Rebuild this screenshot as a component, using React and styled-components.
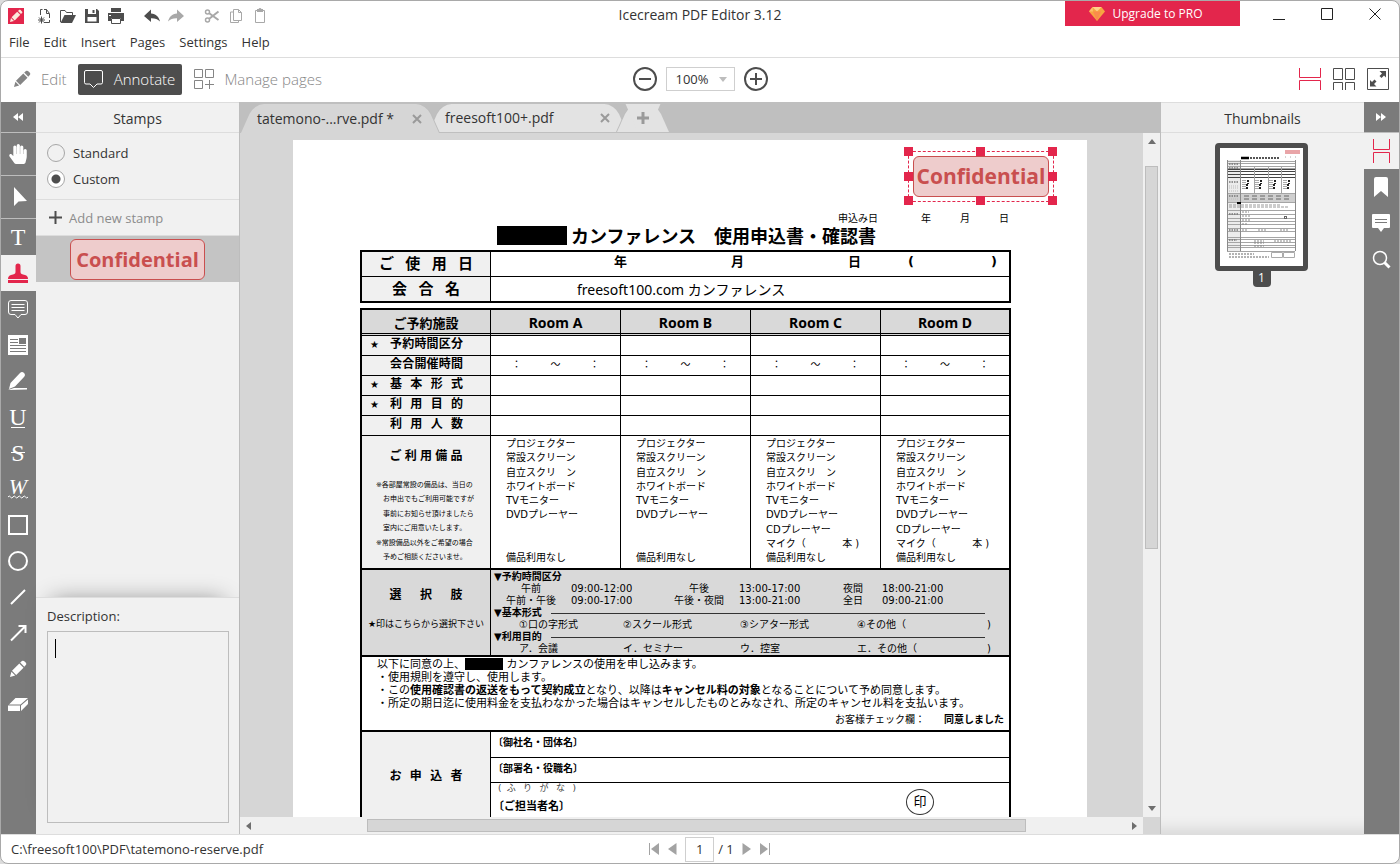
import React from "react";
import styled, { createGlobalStyle, css } from "styled-components";
import { FaHandPaper } from "react-icons/fa";

const c = {
  red: "#e3264c",
  rail: "#7b7b7b",
  panel: "#f1f1f1",
  line: "#dddddd",
  edge: "#bdbdbd",
  canvas: "#d6d6d6",
  dark: "#4d4d4d",
  text: "#333333",
  mute: "#8c8c8c",
};

const GlobalStyle = createGlobalStyle`
  *, *::before, *::after { box-sizing: border-box; }
  body { margin: 0; background: #dcdcdc; font-family: "Open Sans", "Noto Sans", sans-serif; font-size: 13px; color: ${c.text}; }
  button, input, select, textarea { font: inherit; color: inherit; margin: 0; padding: 0; border: 0; background: none; }
  svg { display: block; flex: none; }
`;

const Window = styled.div`
  height: 100vh;
  display: flex;
  flex-direction: column;
  overflow: hidden;
  background: #fff;
  border: 1px solid #a9a9a9;
  border-radius: 8px;
`;

/* ---------- title, menu and mode bars ---------- */

const TitleBar = styled.header`
  display: grid;
  grid-template-columns: 1fr auto 1fr;
  align-items: start;
  height: 29px;
`;
const QuickBar = styled.div`
  display: flex;
  padding: 3px 0 0 3px;
`;
const QuickButton = styled.button`
  width: 24px;
  height: 24px;
  color: ${(p) => (p.$muted ? "#a8a8a8" : c.dark)};
  margin-right: ${(p) => p.$gap || 0}px;
`;
const Title = styled.h1`
  margin: 0;
  font-size: 14px;
  line-height: 28px;
  font-weight: 400;
`;
const WindowButtons = styled.div`
  display: flex;
  justify-content: flex-end;
`;
const Upgrade = styled.button`
  width: 175px;
  height: 25px;
  margin-right: 15px;
  padding-right: 14px;
  display: flex;
  align-items: center;
  justify-content: center;
  gap: 8px;
  background: ${c.red};
  color: #fff;
  font-size: 12px;
`;
const WindowButton = styled.button`
  width: 48px;
  height: 26px;
  display: grid;
  place-items: center;
  color: #222;
`;
const MenuBar = styled.nav`
  display: flex;
  gap: 14px;
  height: 28px;
  padding-left: 8px;
  border-bottom: 1px solid ${c.line};
`;
const MenuButton = styled.button`
  line-height: 24px;
  height: 24px;
`;
const ModeBar = styled.div`
  display: grid;
  grid-template-columns: 1fr auto 1fr;
  align-items: center;
  height: 44px;
  padding-bottom: 2px;
`;
const Modes = styled.div`
  display: flex;
  align-items: center;
`;
const ModeButton = styled.button`
  display: flex;
  align-items: center;
  gap: 10px;
  height: 31px;
  padding: 0 7px 0 6px;
  border-radius: 2px;
  font-size: 15px;
  font-weight: 300;
  color: ${(p) => (p.$active ? "#fff" : "#858585")};
  background: ${(p) => (p.$active ? c.dark : "transparent")};
  & + & { margin-left: 6px; }
  &:first-child { padding: 0 5px 0 12px; }
`;
const ZoomGroup = styled.div`
  display: flex;
  align-items: center;
  gap: 9px;
`;
const IconButton = styled.button`
  display: grid;
  place-items: center;
  color: ${(p) => p.$color || c.dark};
`;
const SelectWrap = styled.label`
  position: relative;
  svg { position: absolute; right: 8px; top: 10px; pointer-events: none; }
`;
const ZoomSelect = styled.select`
  appearance: none;
  width: 69px;
  height: 24px;
  padding: 0 0 0 9px;
  border: 1px solid #cfcfcf;
`;
const Views = styled.div`
  display: flex;
  justify-content: flex-end;
  gap: 12px;
  padding-right: 10px;
`;

/* ---------- body ---------- */

const Body = styled.main`
  flex: 1;
  min-height: 0;
  display: grid;
  grid-template-columns: 35px 204px 1fr 204px 35px;
`;
const Rail = styled.div`
  display: flex;
  flex-direction: column;
  background: ${c.rail};
`;
const RailButton = styled.button`
  flex: none;
  height: ${(p) => p.$h || 36}px;
  padding-right: 1px;
  display: grid;
  place-items: center;
  color: ${(p) => (p.$active ? c.red : "#fff")};
  background: ${(p) => (p.$active ? c.panel : "transparent")};
  border-bottom: ${(p) => (p.$line ? `1px solid ${c.edge}` : "0")};
`;
const Side = styled.aside`
  display: flex;
  flex-direction: column;
  min-height: 0;
  background: ${c.panel};
  border: 0 solid ${c.edge};
  border-right-width: ${(p) => (p.$left ? 1 : 0)}px;
  border-left-width: ${(p) => (p.$left ? 0 : 1)}px;
`;
const SideTitle = styled.h2`
  margin: 0;
  height: 31px;
  flex: none;
  border: solid ${c.line};
  border-width: 1px 0;
  font-size: 14px;
  font-weight: 400;
  line-height: 31px;
  text-align: center;
`;
const RadioGroup = styled.div`
  display: flex;
  flex-direction: column;
  gap: 8px;
  height: 67px;
  padding: 11px 10px 0 11px;
  border-bottom: 1px solid ${c.line};
`;
const RadioLabel = styled.label`
  display: flex;
  align-items: center;
  gap: 8px;
  line-height: 18px;
`;
const Radio = styled.input`
  appearance: none;
  width: 18px;
  height: 18px;
  border: 1px solid #a6a6a6;
  border-radius: 50%;
  &:checked {
    background: radial-gradient(circle, ${c.dark} 0 4px, #fff 5px);
  }
`;
const AddStamp = styled.button`
  display: flex;
  align-items: center;
  gap: 7px;
  height: 36px;
  padding-left: 13px;
  border-bottom: 1px solid ${c.line};
  color: ${c.mute};
`;
const StampItem = styled.button`
  height: 46px;
  display: grid;
  place-items: center;
  background: #c4c4c4;
`;
const StampFace = styled.span`
  display: block;
  width: ${(p) => p.$w}px;
  height: 41px;
  border: 1px solid #c94f4f;
  border-radius: 6px;
  background: #eecccc;
  color: #c94f4f;
  font: 700 ${(p) => p.$size}px/39px "Open Sans", sans-serif;
  text-align: center;
`;
const Description = styled.div`
  margin-top: auto;
  display: flex;
  flex-direction: column;
  height: 237px;
  padding: 8px 10px 11px 11px;
  border-top: 1px solid ${c.line};
  background: ${c.panel};
  box-shadow: 0 -12px 22px -16px rgba(0, 0, 0, 0.45);
`;
const DescriptionLabel = styled.label`
  line-height: 20px;
`;
const FieldWrap = styled.div`
  position: relative;
  flex: 1;
  margin-top: 5px;
`;
const Field = styled.textarea`
  display: block;
  width: 100%;
  height: 100%;
  padding: 8px;
  border: 1px solid ${c.edge};
  resize: none;
`;
const Caret = styled.span`
  position: absolute;
  left: 8px;
  top: 8px;
  width: 1px;
  height: 19px;
  background: #000;
`;

/* ---------- tabs and viewer ---------- */

const Center = styled.section`
  display: flex;
  flex-direction: column;
  min-width: 0;
  min-height: 0;
  background: ${c.canvas};
`;
const TabBar = styled.div`
  display: flex;
  align-items: flex-end;
  height: 31px;
  padding-left: 1px;
  background: #bfbfbf;
`;
const Tab = styled.div`
  position: relative;
  z-index: ${(p) => (p.$active ? 3 : p.$add ? 2 : 1)};
  display: flex;
  align-items: center;
  justify-content: space-between;
  height: ${(p) => (p.$active ? 29 : 28)}px;
  width: ${(p) => p.$w}px;
  padding: 0 17px 0 16px;
  isolation: isolate;
  font-size: 14px;
  & + & { margin-left: -10px; margin-bottom: 1px; }
  &::before, &::after {
    content: "";
    position: absolute;
    z-index: -1;
    top: 0;
    bottom: 0;
    width: 60%;
    background: ${(p) => (p.$active ? "#d6d6d6" : "#e3e3e3")};
  }
  &::before {
    left: 0;
    transform: skewX(-24deg);
    transform-origin: bottom left;
    border-top-left-radius: 10px;
    box-shadow: ${(p) => (p.$active ? "none" : "-1px 0 0 #bdbdbd")};
  }
  &::after {
    right: 0;
    transform: skewX(24deg);
    transform-origin: bottom right;
    border-top-right-radius: 10px;
    box-shadow: ${(p) => (p.$active ? "1px 0 0 #bdbdbd" : "none")};
  }
`;
const TabName = styled.button`
  line-height: 26px;
`;
const TabIcon = styled.button`
  color: #9a9a9a;
`;
const Viewer = styled.div`
  flex: 1;
  min-height: 0;
  display: grid;
  grid-template-columns: 1fr 17px;
  grid-template-rows: 1fr 17px;
`;
const Viewport = styled.div`
  overflow: hidden;
  min-height: 0;
  display: flex;
  justify-content: center;
  align-items: flex-start;
  padding: 7px 3px 0 0;
`;
const Track = styled.div`
  display: flex;
  flex-direction: ${(p) => (p.$vertical ? "column" : "row")};
  align-items: center;
  background: #f0f0f0;
  padding: ${(p) => (p.$vertical ? "6px 0" : "0 6px")};
`;
const Thumb = styled.div`
  background: ${c.canvas};
  border: 1px solid ${c.edge};
  flex: none;
  ${(p) =>
    p.$vertical
      ? css`width: 13px; height: 57%; margin: 22px 0 auto;`
      : css`height: 13px; width: 74%; margin: 0 auto 0 116px;`}
`;

/* ---------- the document page ---------- */

const Page = styled.article`
  position: relative;
  flex: none;
  width: 794px;
  height: 1123px;
  padding: 0 76px 0 67px;
  background: #fff;
  color: #000;
  font: 10px/14px "DejaVu Sans", "Noto Sans CJK JP", sans-serif;
`;
const DateLine = styled.div`
  display: grid;
  grid-template-columns: 83px 39px 39px 10px;
  justify-content: end;
  padding: 72px 2px 0 0;
`;
const Headline = styled.h2`
  display: flex;
  gap: 4px;
  height: 24px;
  margin: 0;
  padding-left: 137px;
  font: 700 18px/18px "Noto Sans CJK JP", sans-serif;
  white-space: nowrap;
`;
const Redacted = styled.span`
  display: inline-block;
  width: ${(p) => p.$w}px;
  height: ${(p) => p.$h}px;
  background: #000;
  vertical-align: top;
`;
const Form = styled.table`
  width: 100%;
  table-layout: fixed;
  border: 2px solid #000;
  border-spacing: 0;
  margin-bottom: 5px;
`;
const cell = css`
  height: ${(p) => p.$h}px;
  padding: ${(p) => p.$pad || 0}px 0 0;
  border: 0 solid #000;
  border-right-width: ${(p) => (p.$last ? 0 : 1)}px;
  border-bottom-width: ${(p) => (p.$bottom === undefined ? 1 : p.$bottom)}px;
  border-bottom-style: ${(p) => (p.$bottom === 3 ? "double" : "solid")};
  vertical-align: top;
`;
const Th = styled.th`
  ${cell}
  background: ${(p) => (p.$shade ? "#d9d9d9" : "#f0f0f0")};
  font-weight: 700;
  font-size: 13px;
`;
const Td = styled.td`
  ${cell}
  background: ${(p) => (p.$shade ? "#d9d9d9" : "#fff")};
`;
const HeadText = styled.div`
  font: 700 ${(p) => p.$size}px/20px "Noto Sans", "Noto Sans CJK JP", sans-serif;
`;
const Spread = styled.div`
  width: ${(p) => p.$w || 73}px;
  margin: ${(p) => p.$top || 0}px auto 0;
  font: 700 ${(p) => p.$size || 12}px/16px "Noto Sans CJK JP", sans-serif;
  text-align: left;
  text-align-last: justify;
  white-space: nowrap;
`;
const Starred = styled.div`
  display: grid;
  grid-template-columns: 20px 73px;
  padding-left: 8px;
  line-height: 17px;
  font-size: 12px;
  text-align: left;
  white-space: nowrap;
  span:first-child { font-size: 10px; }
  span:last-child { text-align-last: justify; }
`;
const DateFields = styled.div`
  display: grid;
  grid-template-columns: 117px 117px 60px 83px auto;
  padding-left: 123px;
  font-size: 13px;
  line-height: 20px;
  font-weight: 700;
`;
const MeetingName = styled.div`
  padding: 3px 0 0 86px;
  font: 14px/20px "Noto Sans", "Noto Sans CJK JP", sans-serif;
`;
const TimeRange = styled.div`
  display: flex;
  justify-content: space-between;
  width: 88px;
  margin: 0 auto;
  line-height: 18px;
`;
const Lines = styled.ul`
  list-style: none;
  margin: ${(p) => p.$top || 0}px 0 0;
  padding: 0 0 0 ${(p) => p.$left}px;
  height: ${(p) => p.$h}px;
  display: flex;
  flex-direction: column;
  justify-content: space-between;
  font-size: ${(p) => p.$size || 10}px;
  font-weight: 400;
  text-align: left;
  white-space: pre;
  li { min-height: 14px; }
`;
const Hint = styled.div`
  margin-top: 14px;
  font-size: 9px;
  line-height: 16px;
  font-weight: 400;
`;
const ChoiceHead = styled.div`
  display: flex;
  align-items: center;
  padding: 0 24px 0 3px;
  line-height: 12px;
  font-weight: 700;
  gap: 9px;
  &::after {
    content: "";
    flex: 1;
    border-top: 1px solid ${(p) => (p.$rule ? "#333" : "transparent")};
  }
`;
const Slots = styled.div`
  display: grid;
  grid-template-columns: 50px 118px 50px 119px 20px 100px;
  padding-left: 15px;
  line-height: 12px;
  text-align: center;
  span:nth-child(even) { padding-left: 15px; text-align: left; }
  span:last-child { padding-left: 19px; }
`;
const Options = styled.div`
  display: grid;
  grid-template-columns: 104px 117px 117px 130px auto;
  padding-left: 28px;
  line-height: 12px;
  white-space: nowrap;
`;
const Terms = styled.p`
  margin: 0;
  padding-left: 15px;
  font-size: 11px;
  line-height: 13px;
  white-space: nowrap;
`;
const Agree = styled.div`
  display: flex;
  justify-content: flex-end;
  gap: 19px;
  margin-top: 3px;
  padding-right: 5px;
`;
const FieldName = styled.div`
  padding-left: 2px;
  font-size: ${(p) => p.$size || 10}px;
  font-weight: 700;
  line-height: ${(p) => p.$lh || 22}px;
`;
const ContactRow = styled.div`
  display: grid;
  grid-template-columns: 415px auto;
`;
const Furigana = styled.div`
  width: 78px;
  margin: 0 0 6px 7px;
  font-size: 9px;
  line-height: 10px;
  color: #444;
  text-align-last: justify;
`;
const Seal = styled.span`
  display: grid;
  place-items: center;
  width: 28px;
  height: 26px;
  margin-top: 6px;
  border: 1px solid #333;
  border-radius: 50%;
  font-size: 13px;
`;
const Selection = styled.div`
  position: absolute;
  left: 615px;
  top: 11px;
  width: 146px;
  height: 51px;
  padding: 4px;
  border: 1px dashed ${c.red};
`;
const Handle = styled.i`
  position: absolute;
  left: ${(p) => p.$x}%;
  top: ${(p) => p.$y}%;
  width: 9px;
  height: 9px;
  margin: -5px;
  background: ${c.red};
`;

/* ---------- thumbnails and status ---------- */

const ThumbList = styled.div`
  flex: 1;
  display: flex;
  flex-direction: column;
  align-items: center;
  padding: 10px 2px 0 0;
  box-shadow: inset 0 -22px 16px -18px rgba(0, 0, 0, 0.12);
`;
const ThumbFrame = styled.button`
  width: 93px;
  height: 128px;
  border: 5px solid ${c.dark};
  border-radius: 4px;
  background: #fff;
`;
const ThumbNumber = styled.span`
  width: 18px;
  height: 16px;
  line-height: 14px;
  text-align: center;
  color: #fff;
  font-size: 12px;
  background: ${c.dark};
  border-radius: 0 0 4px 4px;
`;
const StatusBar = styled.footer`
  display: grid;
  grid-template-columns: 1fr auto 1fr;
  align-items: center;
  height: 29px;
  padding-left: 10px;
  border-top: 1px solid ${c.line};
`;
const Pager = styled.div`
  display: flex;
  align-items: center;
  color: #a3a3a3;
  gap: 8px;
  padding-left: 9px;
`;
const PageInput = styled.input`
  width: 29px;
  height: 25px;
  border: 1px solid #cfcfcf;
  text-align: center;
  color: ${c.text};
`;
const PageCount = styled.span`
  color: ${c.text};
  margin-left: -4px;
`;

/* ---------- icons ---------- */

const Svg = ({ w = 24, h = w, children, ...rest }) => (
  <svg width={w} height={h} viewBox={`0 0 ${w} ${h}`} fill="none" aria-hidden="true" {...rest}>
    {children}
  </svg>
);

const PencilShape = () => (
  <g fill="currentColor">
    <path d="M1 17l1.400-5.200 3.800 3.800z" />
    <path d="M3 10.800 10.300 3.500l4.200 4.200L7.200 15z" />
    <path d="M11.200 2.600l1.800-1.600c1-.7 1.800-.3 2.600.4l1 1c.8.800.9 1.700.2 2.600l-1.500 1.800z" />
  </g>
);

const quick = [
  ["App", 4, false, (
    <>
      <path d="M4 4h16v16H4z" fill={c.red} />
      <path d="M6 18l1-4 3 3z M7.600 13.300l5.600-5.600 3.100 3.100-5.600 5.600z M14 7l1-1c.6-.5 1-.4 1.600 0l1.400 1.400c.5.600.5 1 0 1.600l-1 1z" fill="#fbe9dc" />
    </>
  )],
  ["New", 0, false, (
    <g stroke="currentColor">
      <path d="M8.500 11V5.500h2M12 5.500h2.500M12 18.500h5.500V16M17.500 14V10M14.500 5.500 17.500 9.500H14.500z" />
      <path d="M9.500 12.500v7M6 16h7M7 13.500l5 5M12 13.500l-5 5" />
    </g>
  )],
  ["Open", 0, false, (
    <>
      <path d="M4.500 18V6.500H9l1.500 2h6V11" stroke="currentColor" />
      <path d="M4.500 19 8.500 11H20l-4 8z" fill="currentColor" />
    </>
  )],
  ["Save", 0, false, (
    <path d="M5 5h12l2 2v12H5zM8 5v5h8V5zM7.500 13v4.500h9V13zM12.500 6h2v3h-2z" fill="currentColor" fillRule="evenodd" />
  )],
  ["Print", 12, false, (
    <>
      <path d="M7 4h10v4H7zM4 9h16v8h-3v-3H7v3H4zM5 11v1h2v-1z" fill="currentColor" fillRule="evenodd" />
      <path d="M7.500 14.500h9v5h-9z" stroke="currentColor" />
    </>
  )],
  ["Undo", 0, false, <path d="M4 12l7-6.500v4c5 .3 8 3.500 9 8-2.600-2.600-5-3.300-9-3.200V18z" fill="currentColor" />],
  ["Redo", 12, true, <path d="M20 12l-7-6.500v4c-5 .3-8 3.500-9 8 2.600-2.600 5-3.300 9-3.200V18z" fill="currentColor" />],
  ["Cut", 0, true, (
    <>
      <circle cx="7.500" cy="8" r="2" stroke="currentColor" strokeWidth="1.500" />
      <circle cx="7.500" cy="16" r="2" stroke="currentColor" strokeWidth="1.500" />
      <path d="M9.200 9.200 18.500 16M9.200 14.800 18.500 7.500" stroke="currentColor" strokeWidth="2" />
    </>
  )],
  ["Copy", 0, true, (
    <path d="M9.500 5.500h5l3 3v8h-8zM14.500 5.500v3h3M9.500 8H6.500v10.500h8v-2" stroke="currentColor" />
  )],
  ["Paste", 0, true, (
    <>
      <path d="M7.500 6.500h9v12h-9z" stroke="currentColor" />
      <path d="M9 5h1.500l1-1h1l1 1H15v3H9z" fill="currentColor" />
    </>
  )],
];

const Bracket = ({ w, h }) => (
  <Svg w={w} h={h}>
    <path d={`M.5 0v${h / 2 - 1.5}h${w - 1}V0M.5 ${h}v-${h / 2 - 1.5}h${w - 1}v${h / 2 - 1.5}`} stroke={c.red} />
  </Svg>
);

const GridView = () => (
  <Svg w={22}>
    <path d="M.5.5h9v11h-9zM12.500.5h9v11h-9zM.5 22v-7.500h9V22M12.500 22v-7.500h9V22" stroke="currentColor" />
  </Svg>
);

const FullScreen = () => (
  <Svg w={22}>
    <path d="M.5.5h21v21H.5z" stroke="currentColor" />
    <path d="M12.500 3H19v6.500l-2-2-2.500 2.500-2-2L15 5.500zM9.500 18.500H3V12l2 2 2.500-2.500 2 2L7 16z" fill="currentColor" />
  </Svg>
);

const Letter = ({ ch, italic, size = 24, base = 22, children }) => (
  <Svg w={28}>
    <text x="14" y={base} textAnchor="middle" fill="currentColor" fontFamily="Liberation Serif, serif" fontSize={size} fontStyle={italic ? "italic" : "normal"}>
      {ch}
    </text>
    {children}
  </Svg>
);

const Chevrons = ({ flip }) => (
  <Svg w={12} h={10} transform={flip ? "scale(-1 1)" : undefined}>
    <path d="M6 1v8L1 5zM11 1v8L6 5z" fill="currentColor" />
  </Svg>
);

const tools = [
  ["Hand", 43, true, <FaHandPaper size={20} />],
  ["Select", 43, true, <Svg w={20} h={22}><path d="M6 1v19l4.500-4.500L19 15z" fill="currentColor" /></Svg>],
  ["Text", 36, false, <Letter ch="T" />],
  ["Stamp", 36, false, (
    <Svg w={20} h={22}>
      <path d="M0 18h20v3H0zM0 17c0-2 1-3.500 3-4 3-.5 4.500-1 4.500-3V4a2.500 2.500 0 0 1 5 0v6c0 2 1.500 2.500 4.500 3 2 .5 3 2 3 4z" fill="currentColor" />
    </Svg>
  )],
  ["Note", 36, false, (
    <Svg w={20}>
      <path d="M3 1.500h14q2.500 0 2.500 2.500v9q0 2.500-2.500 2.500h-4l-3 3.500-3-3.500H3Q.5 15.500.5 13V4Q.5 1.500 3 1.500zM3.500 5.500h13M3.500 8.500h13M3.500 11.500h13" stroke="currentColor" />
    </Svg>
  )],
  ["Text box", 36, false, (
    <Svg w={20}>
      <path d="M0 0h20v20H0z" fill="currentColor" />
      <path d="M2 4.500h8M2 7.500h8M2 10.500h16M2 13.500h16M2 16.500h16" stroke={c.rail} />
      <path d="M11 3h7v6h-7z" fill={c.rail} />
    </Svg>
  )],
  ["Highlight", 36, false, (
    <Svg w={20}>
      <path d="M1 18l1.500-6L12 2c1.500-1.500 3-1 4 0s1.500 2.500 0 4l-9 9.500zM0 19l6-2h13v1.500z" fill="currentColor" />
    </Svg>
  )],
  ["Underline", 36, false, <Letter ch="U"><path d="M7 24.500h14" stroke="currentColor" /></Letter>],
  ["Strikeout", 36, false, <Letter ch="S"><path d="M7 13.500h14" stroke="currentColor" /></Letter>],
  ["Squiggly", 36, false, <Letter ch="W" italic size={22} base={19}><path d="M4 22q1.250-2 2.500 0t2.500 0 2.500 0 2.500 0 2.500 0 2.500 0 2.500 0 2.500 0" stroke="currentColor" /></Letter>],
  ["Rectangle", 36, false, <Svg w={20}><path d="M1 1h18v18H1z" stroke="currentColor" strokeWidth="2" /></Svg>],
  ["Ellipse", 36, false, <Svg w={20}><circle cx="10" cy="10" r="9" stroke="currentColor" strokeWidth="2" /></Svg>],
  ["Line", 36, false, <Svg w={20}><path d="M3 17 17 3" stroke="currentColor" strokeWidth="2" /></Svg>],
  ["Arrow", 36, false, <Svg w={20}><path d="M3 17.500 17 3.500M10.500 3H17.500v7" stroke="currentColor" strokeWidth="2" /></Svg>],
  ["Pencil", 36, false, <Svg w={18}><PencilShape /></Svg>],
  ["Eraser", 36, false, (
    <Svg w={20} h={14}>
      <path d="M0 7.500h12V13H0zM1 6.500 7.500 0H20l-7.500 6.500zM13 7.500 20 1.500V6l-7 7z" fill="currentColor" />
    </Svg>
  )],
];

/* ---------- document content ---------- */

const rooms = ["Room A", "Room B", "Room C", "Room D"];
const basic = ["プロジェクター", "常設スクリーン", "自立スクリ　ン", "ホワイトボード", "TVモニター", "DVDプレーヤー"];
const small = [...basic, "", "", "備品利用なし"];
const large = [...basic, "CDプレーヤー", "マイク（　　　  本 )", "備品利用なし"];
const notes = [
  "※各部屋常設の備品は、当日の",
  "　お申出でもご利用可能ですが",
  "　事前にお知らせ頂けましたら",
  "　室内にご用意いたします。",
  "※常設備品以外をご希望の場合",
  "　予めご相談くださいませ。",
];
const gridRows = [
  ["★", "予約時間区分"],
  ["", "会合開催時間", true],
  ["★", "基 本 形 式"],
  ["★", "利 用 目 的"],
  ["", "利 用 人 数"],
];

const Cols = () => (
  <colgroup>
    <col style={{ width: 129 }} />
    <col style={{ width: 130 }} />
    <col style={{ width: 130 }} />
    <col style={{ width: 130 }} />
    <col />
  </colgroup>
);

const handles = [[0, 0], [50, 0], [100, 0], [0, 50], [100, 50], [0, 100], [50, 100], [100, 100]];

function DocumentPage() {
  return (
    <Page lang="ja">
      <DateLine><span>申込み日</span><span>年</span><span>月</span><span>日</span></DateLine>
      <Headline><Redacted $w={70} $h={19} />カンファレンス　使用申込書・確認書</Headline>
      <Form>
        <Cols />
        <tbody>
          <tr>
            <Th $h={25}><Spread $w={94} $size={15} $top={3}>ご 使 用 日</Spread></Th>
            <Td colSpan={4} $last>
              <DateFields><span>年</span><span>月</span><span>日</span><span>(</span><span>)</span></DateFields>
            </Td>
          </tr>
          <tr>
            <Th $h={24} $bottom={0}><Spread $w={68} $size={15} $top={3}>会 合 名</Spread></Th>
            <Td colSpan={4} $last $bottom={0}><MeetingName>freesoft100.com カンファレンス</MeetingName></Td>
          </tr>
        </tbody>
      </Form>
      <Form>
        <Cols />
        <tbody>
          <tr>
            <Th $h={26} $bottom={3} $pad={3} $shade><HeadText $size={13}>ご予約施設</HeadText></Th>
            {rooms.map((r, i) => (
              <Th key={r} $bottom={3} $pad={3} $shade $last={i === 3}><HeadText $size={14}>{r}</HeadText></Th>
            ))}
          </tr>
          {gridRows.map(([star, name, times]) => (
            <tr key={name}>
              <Th $h={20}><Starred><span>{star}</span><span>{name}</span></Starred></Th>
              {rooms.map((r, i) => (
                <Td key={r} $last={i === 3}>
                  {times && <TimeRange><span>：</span><span>～</span><span>：</span></TimeRange>}
                </Td>
              ))}
            </tr>
          ))}
          <tr>
            <Th $h={134} $bottom={2}>
              <Spread $top={11}>ご 利 用 備 品</Spread>
              <Lines $top={15} $left={14} $h={86} $size={7}>{notes.map((n) => <li key={n}>{n}</li>)}</Lines>
            </Th>
            {rooms.map((r, i) => (
              <Td key={r} $bottom={2} $pad={1} $last={i === 3}>
                <Lines $left={15} $h={128}>{(i < 2 ? small : large).map((n, k) => <li key={k}>{n}</li>)}</Lines>
              </Td>
            ))}
          </tr>
          <tr>
            <Th $h={87} $bottom={2} $shade>
              <Spread $top={16}>選 択 肢</Spread>
              <Hint>★印はこちらから選択下さい</Hint>
            </Th>
            <Td colSpan={4} $bottom={2} $pad={1} $shade $last>
              <ChoiceHead>▼予約時間区分</ChoiceHead>
              <Slots><span>午前</span><span>09:00-12:00</span><span>午後</span><span>13:00-17:00</span><span>夜間</span><span>18:00-21:00</span></Slots>
              <Slots><span>午前・午後</span><span>09:00-17:00</span><span>午後・夜間</span><span>13:00-21:00</span><span>全日</span><span>09:00-21:00</span></Slots>
              <ChoiceHead $rule>▼基本形式</ChoiceHead>
              <Options><span>①口の字形式</span><span>②スクール形式</span><span>③シアター形式</span><span>④その他（</span><span>)</span></Options>
              <ChoiceHead $rule>▼利用目的</ChoiceHead>
              <Options><span>ア．会議</span><span>イ．セミナー</span><span>ウ．控室</span><span>エ．その他（</span><span>)</span></Options>
            </Td>
          </tr>
          <tr>
            <Td colSpan={5} $h={75} $bottom={2} $pad={1} $last>
              <Terms>以下に同意の上、<Redacted $w={38} $h={12} /> カンファレンスの使用を申し込みます。</Terms>
              <Terms>・使用規則を遵守し、使用します。</Terms>
              <Terms>・この<b>使用確認書の返送をもって契約成立</b>となり、以降は<b>キャンセル料の対象</b>となることについて予め同意します。</Terms>
              <Terms>・所定の期日迄に使用料金を支払わなかった場合はキャンセルしたものとみなされ、所定のキャンセル料を支払います。</Terms>
              <Agree><span>お客様チェック欄：</span><b>同意しました</b></Agree>
            </Td>
          </tr>
          <tr>
            <Th rowSpan={3}><Spread $top={35}>お 申 込 者</Spread></Th>
            <Td colSpan={4} $h={26} $last><FieldName>〔御社名・団体名〕</FieldName></Td>
          </tr>
          <tr><Td colSpan={4} $h={25} $last><FieldName>〔部署名・役職名〕</FieldName></Td></tr>
          <tr>
            <Td colSpan={4} $h={52} $last>
              <ContactRow>
                <div>
                  <Furigana>( ふ り が な )</Furigana>
                  <FieldName $size={11} $lh={16}>〔ご担当者名〕</FieldName>
                </div>
                <Seal>印</Seal>
              </ContactRow>
            </Td>
          </tr>
        </tbody>
      </Form>
      <Selection>
        <StampFace $w={136} $size={21}>Confidential</StampFace>
        {handles.map(([x, y]) => <Handle key={`${x}-${y}`} $x={x} $y={y} />)}
      </Selection>
    </Page>
  );
}

function MiniPage() {
  const rows = [13, 15, 18, 20, 45, 54, 62, 66, 70, 73, 76, 80, 83, 89, 91, 94, 97, 99, 103];
  return (
    <Svg w={83} h={118}>
      <rect x="65" y="2" width="15" height="4" fill="#e9a5a8" />
      <path d="M21 10h8" stroke="#000" strokeWidth="2.500" />
      <path d="M30 10h30" stroke="#555" strokeWidth="2" strokeDasharray="2 1" />
      <path d="M65 9h12" stroke="#aaa" strokeDasharray="1 4" />
      <rect x="7" y="12" width="14" height="91" fill="#ececec" />
      <rect x="7" y="45" width="68" height="9" fill="#cfcfcf" />
      {rows.map((y) => <path key={y} d={`M7 ${y}.5h68`} stroke="#a5a5a5" />)}
      <path d="M7 21.500h68M7 23.500h68M7 26.500h68M7 29.500h68" stroke="#444" />
      <path d="M7.500 12v91M75.500 12v91M20.500 12v91" stroke="#8a8a8a" />
      <path d="M34.500 18v27M48.500 18v27M61.500 18v27" stroke="#a5a5a5" />
      {[24, 37, 51, 65].map((x) => (
        <g key={x}>
          <path d={`M${x} 32v9`} stroke="#aaa" strokeWidth="4" strokeDasharray="1 1" />
          <path d={`M${x + 4} 32v4M${x + 3} 36v5`} stroke="#222" strokeWidth="2" strokeDasharray="2 1" />
        </g>
      ))}
      <path d="M9 16h10M9 20h10M9 34h9M9 48h9M9 66h9M9 82h9M9 92h8" stroke="#777" strokeWidth="1.500" strokeDasharray="1.500 1" />
      <path d="M9 38h10M9 40h10M9 43h10M9 51h10" stroke="#bbb" strokeDasharray="1 1" />
      <path d="M24 48h46M24 51h46" stroke="#666" strokeDasharray="5 3" />
      <path d="M17 55h4" stroke="#000" strokeWidth="2" />
      <path d="M9 57h52M9 59h60" stroke="#999" strokeDasharray="3 1" />
      <path d="M22 64h7M22 68h8M22 72h8M22 76h6M22 82h5M38 82h8M60 82h8" stroke="#888" strokeDasharray="2 1" />
      <rect x="64.500" y="68.500" width="2" height="2" stroke="#666" />
      <path d="M34 93h10M34 95h10M34 98h10M54 93h18" stroke="#888" strokeDasharray="2 1" />
      <path d="M9 106h25M9 109h40" stroke="#666" strokeDasharray="2 1" />
      <path d="M51.500 104.500h11v5h-11zM63.500 104.500h11v5h-11z" stroke="#aaa" />
    </Svg>
  );
}

const Cross = () => <Svg w={10}><path d="M1 1l8 8M9 1 1 9" stroke="currentColor" strokeWidth="2" /></Svg>;
const Tri = ({ d, w = 7, h = 7 }) => <Svg w={w} h={h}><path d={d} fill="#6e6e6e" /></Svg>;

export default function App() {
  return (
    <Window>
      <GlobalStyle />
      <TitleBar>
        <QuickBar>
          {quick.map(([name, gap, muted, art]) => (
            <QuickButton key={name} $gap={gap} $muted={muted} aria-label={name}><Svg>{art}</Svg></QuickButton>
          ))}
        </QuickBar>
        <Title>Icecream PDF Editor 3.12</Title>
        <WindowButtons>
          <Upgrade>
            <Svg w={16} h={14}>
              <path d="M3.500 0h9L16 4.500 8 14 0 4.500z" fill="#f7a541" />
              <path d="M3.500 0 8 4.500 12.500 0z" fill="#ffd08a" />
              <path d="M4 4.500h8L8 14z" fill="#fb8b4b" />
              <path d="M0 4.500 3.500 0 4 4.500z" fill="#ffbf6b" />
            </Svg>
            Upgrade to PRO
          </Upgrade>
          <WindowButton aria-label="Minimize"><Svg w={12}><path d="M0 11.500h12" stroke="currentColor" /></Svg></WindowButton>
          <WindowButton aria-label="Maximize"><Svg w={12}><path d="M.5.5h11v11H.5z" stroke="currentColor" /></Svg></WindowButton>
          <WindowButton aria-label="Close"><Svg w={12}><path d="M.5.5l11 11M11.500.5l-11 11" stroke="currentColor" /></Svg></WindowButton>
        </WindowButtons>
      </TitleBar>
      <MenuBar>
        {["File", "Edit", "Insert", "Pages", "Settings", "Help"].map((m) => <MenuButton key={m}>{m}</MenuButton>)}
      </MenuBar>
      <ModeBar>
        <Modes>
          <ModeButton><Svg w={18}><PencilShape /></Svg>Edit</ModeButton>
          <ModeButton $active>
            <Svg w={20}><path d="M2 1.500h15q1.500 0 1.500 1.500v10.500q0 1.500-1.500 1.500h-4l-3.500 3.500L6 15H2Q.5 15 .5 13.500V3Q.5 1.500 2 1.500z" stroke="currentColor" /></Svg>
            Annotate
          </ModeButton>
          <ModeButton>
            <Svg w={20}><path d="M.5.5h8v8h-8zM11.500.5h8v8h-8zM.5 11.500h8v8h-8zM15.500 11v9M11 15.500h9" stroke="currentColor" /></Svg>
            Manage pages
          </ModeButton>
        </Modes>
        <ZoomGroup>
          <IconButton aria-label="Zoom out"><Svg><circle cx="12" cy="12" r="11" stroke="currentColor" strokeWidth="2" /><path d="M6 12h12" stroke="currentColor" strokeWidth="2" /></Svg></IconButton>
          <SelectWrap>
            <ZoomSelect aria-label="Zoom" defaultValue="100%"><option>100%</option></ZoomSelect>
            <Svg w={8} h={5}><path d="M0 0h8L4 5z" fill="#bdbdbd" /></Svg>
          </SelectWrap>
          <IconButton aria-label="Zoom in"><Svg><circle cx="12" cy="12" r="11" stroke="currentColor" strokeWidth="2" /><path d="M6 12h12M12 6v12" stroke="currentColor" strokeWidth="2" /></Svg></IconButton>
        </ZoomGroup>
        <Views>
          <IconButton aria-label="Continuous view"><Bracket w={22} h={22} /></IconButton>
          <IconButton aria-label="Grid view"><GridView /></IconButton>
          <IconButton aria-label="Full screen"><FullScreen /></IconButton>
        </Views>
      </ModeBar>
      <Body>
        <Rail>
          <RailButton $h={31} $line aria-label="Collapse panel"><Chevrons /></RailButton>
          {tools.map(([name, h, line, art]) => (
            <RailButton key={name} $h={h} $line={line} $active={name === "Stamp"} aria-label={name}>{art}</RailButton>
          ))}
        </Rail>
        <Side $left>
          <SideTitle>Stamps</SideTitle>
          <RadioGroup>
            <RadioLabel><Radio type="radio" name="kind" />Standard</RadioLabel>
            <RadioLabel><Radio type="radio" name="kind" defaultChecked />Custom</RadioLabel>
          </RadioGroup>
          <AddStamp><Svg w={13}><path d="M6.500 0v13M0 6.500h13" stroke={c.dark} strokeWidth="2" /></Svg>Add new stamp</AddStamp>
          <StampItem><StampFace $w={135} $size={20}>Confidential</StampFace></StampItem>
          <Description>
            <DescriptionLabel htmlFor="description">Description:</DescriptionLabel>
            <FieldWrap><Field id="description" /><Caret /></FieldWrap>
          </Description>
        </Side>
        <Center>
          <TabBar>
            <Tab $w={198} $active>
              <TabName>tatemono-...rve.pdf *</TabName>
              <TabIcon aria-label="Close tab"><Cross /></TabIcon>
            </Tab>
            <Tab $w={198}>
              <TabName>freesoft100+.pdf</TabName>
              <TabIcon aria-label="Close tab"><Cross /></TabIcon>
            </Tab>
            <Tab $w={52} $add>
              <TabIcon aria-label="New tab"><Svg w={20} h={12}><path d="M4 6h12M10 0v12" stroke="currentColor" strokeWidth="3" /></Svg></TabIcon>
            </Tab>
          </TabBar>
          <Viewer>
            <Viewport><DocumentPage /></Viewport>
            <Track $vertical>
              <Tri d="M0 5 4 0l4 5z" w={8} h={5} />
              <Thumb $vertical />
              <Tri d="M0 0h8L4 5z" w={8} h={5} />
            </Track>
            <Track>
              <Tri d="M5 0v8L0 4z" w={5} h={8} />
              <Thumb />
              <Tri d="M0 0v8l5-4z" w={5} h={8} />
            </Track>
          </Viewer>
        </Center>
        <Side>
          <SideTitle>Thumbnails</SideTitle>
          <ThumbList>
            <ThumbFrame aria-label="Page 1"><MiniPage /></ThumbFrame>
            <ThumbNumber>1</ThumbNumber>
          </ThumbList>
        </Side>
        <Rail>
          <RailButton $h={31} $line aria-label="Collapse panel"><Chevrons flip /></RailButton>
          <RailButton $active aria-label="Thumbnails"><Bracket w={17} h={24} /></RailButton>
          <RailButton aria-label="Bookmarks"><Svg w={14} h={20}><path d="M0 2q0-2 2-2h10q2 0 2 2v18l-7-6-7 6z" fill="currentColor" /></Svg></RailButton>
          <RailButton aria-label="Comments">
            <Svg w={18}><path d="M1 0h16q1 0 1 1v12q0 1-1 1h-5l-3 4-3-4H1q-1 0-1-1V1q0-1 1-1z" fill="currentColor" /><path d="M3 5.500h12M3 8.500h12" stroke={c.rail} /></Svg>
          </RailButton>
          <RailButton aria-label="Search">
            <Svg w={19}><circle cx="8" cy="8" r="6.500" stroke="currentColor" strokeWidth="1.500" /><path d="M12.500 12.500 17.500 17.500" stroke="currentColor" strokeWidth="3" /></Svg>
          </RailButton>
        </Rail>
      </Body>
      <StatusBar>
        <span>C:\freesoft100\PDF\tatemono-reserve.pdf</span>
        <Pager>
          <IconButton aria-label="First page" $color="inherit"><Svg w={11} h={12}><path d="M.5 0v12" stroke="currentColor" /><path d="M10 0v12L2 6z" fill="currentColor" /></Svg></IconButton>
          <IconButton aria-label="Previous page" $color="inherit"><Svg w={9} h={12}><path d="M8.500 0v12L0 6z" fill="currentColor" /></Svg></IconButton>
          <PageInput aria-label="Page" defaultValue="1" />
          <PageCount>/ 1</PageCount>
          <IconButton aria-label="Next page" $color="inherit"><Svg w={9} h={12}><path d="M.5 0v12L9 6z" fill="currentColor" /></Svg></IconButton>
          <IconButton aria-label="Last page" $color="inherit"><Svg w={11} h={12}><path d="M10.500 0v12" stroke="currentColor" /><path d="M1 0v12l8-6z" fill="currentColor" /></Svg></IconButton>
        </Pager>
      </StatusBar>
    </Window>
  );
}
